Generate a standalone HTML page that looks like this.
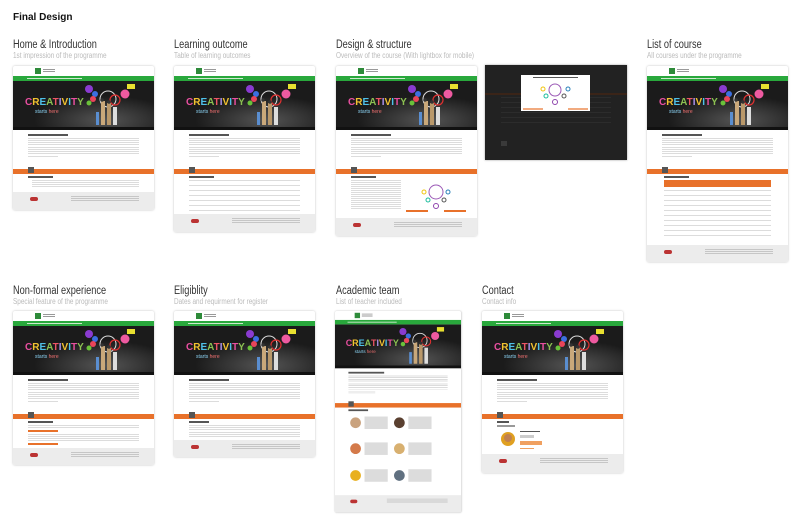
<!DOCTYPE html>
<html><head><meta charset="utf-8"><style>
*{margin:0;padding:0;box-sizing:border-box}
body{width:800px;height:524px;background:#fff;position:relative;overflow:hidden;font-family:"Liberation Sans",sans-serif}
.h1{position:absolute;left:13px;top:12px;font-size:10px;font-weight:bold;color:#111}
.t{position:absolute;font-size:11.5px;color:#333;line-height:12px;transform:scaleX(.8);transform-origin:0 0;white-space:nowrap}
.t span{display:block;font-size:8px;color:#bbb;line-height:10px;margin-top:0px}
.c{position:absolute;width:141px;background:#fff;box-shadow:0 0 2px rgba(0,0,0,.25);border-radius:2px;overflow:hidden;display:flex;flex-direction:column}
.hd{height:10px;position:relative;flex:none}
.hd:before{content:"";position:absolute;left:22px;top:2px;width:6px;height:6px;background:#2e8b3a}
.hd:after{content:"";position:absolute;left:30px;top:3px;width:12px;height:4px;background:repeating-linear-gradient(#999 0 1px,transparent 1px 2px)}
.gr{height:5px;background:#29a83c;flex:none;position:relative}
.gr:after{content:"";position:absolute;left:14px;top:2px;width:55px;height:1px;background:#cfe9cf}
.hero{height:49px;flex:none;background:#1c1c1c;display:block}
.in{height:39px;flex:none;position:relative;padding:4px 15px 0}
.nv{height:5px;background:#e8712a;flex:none}
.ct{flex:none;position:relative;padding:2px 15px}
.ft{flex:1;background:#ececec;position:relative}
.ft:before{content:"";position:absolute;left:17px;top:5px;width:8px;height:4px;background:#b33;border-radius:2px}
.ft:after{content:"";position:absolute;left:58px;top:4px;width:68px;height:5px;background:repeating-linear-gradient(#c6c6c6 0 1px,transparent 1px 2px)}
.ln{height:5px;background:repeating-linear-gradient(#dcdcdc 0 1px,transparent 1px 2px);margin-bottom:2px}
.tt{height:2px;width:40px;background:#555;margin-bottom:2px}
.qr{width:6px;height:6px;background:#555;display:inline-block}
.ot{height:2px;width:30px;background:#e8712a;margin:2px 0}
</style></head><body>
<div class="h1">Final Design</div>

<svg width="0" height="0" style="position:absolute"><defs>
<radialGradient id="rg" cx="0.65" cy="0.8" r="0.5"><stop offset="0" stop-color="#555"/><stop offset="1" stop-color="#1b1b1b"/></radialGradient>
<g id="hero">
<rect width="141" height="49" fill="url(#rg)"/>
<rect x="0" y="46" width="141" height="3" fill="#111"/>
<text x="12" y="24" font-size="10" font-weight="bold" fill="#e94fa0" font-family="Liberation Sans">C<tspan fill="#f2c230">R</tspan><tspan fill="#4fc1e9">E</tspan><tspan fill="#8cc152">A</tspan><tspan fill="#ed5565">T</tspan><tspan fill="#ac92ec">I</tspan><tspan fill="#f2c230">V</tspan><tspan fill="#4fc1e9">I</tspan><tspan fill="#e94fa0">T</tspan><tspan fill="#8cc152">Y</tspan></text>
<text x="22" y="32" font-size="5" fill="#8ad0f0" font-family="Liberation Sans">starts <tspan fill="#f07070">here</tspan></text>
<circle cx="76" cy="8" r="4" fill="#8a3bd0"/><circle cx="82" cy="13" r="3" fill="#3c6fe0"/>
<circle cx="80" cy="18" r="3" fill="#e8455a"/><circle cx="76" cy="22" r="2.5" fill="#6ac13a"/>
<circle cx="112" cy="13" r="4.5" fill="#ee5aa0"/><rect x="114" y="3" width="8" height="5" fill="#e8e030"/>
<circle cx="95" cy="18" r="8" fill="none" stroke="#ddd" stroke-width="1"/>
<circle cx="102" cy="19" r="5" fill="none" stroke="#e03030" stroke-width="1.2"/>
<rect x="88" y="20" width="4" height="24" fill="#c9a87a"/><rect x="94" y="22" width="4" height="22" fill="#b9986a"/>
<rect x="100" y="26" width="4" height="18" fill="#ddd"/><rect x="83" y="31" width="3" height="13" fill="#5a8ed0"/>
<circle cx="89" cy="19" r="1.8" fill="#333"/><circle cx="96" cy="21" r="1.8" fill="#333"/>
</g></defs></svg>

<!-- Row 1 -->
<div class="t" style="left:13px;top:39px">Home &amp; Introduction<span>1st impression of the programme</span></div>
<div class="c" style="left:13px;top:66px;height:144px"><div class="hd"></div><div class="gr"></div><svg class="hero" viewBox="0 0 141 49" preserveAspectRatio="none"><use href="#hero"/></svg><div class="in"><div class="tt"></div><div class="ln" style="height:7px"></div><div class="ln" style="height:7px"></div><div class="ln" style="width:30px;height:2px"></div><span class="qr"></span></div><div class="nv"></div><div class="ct" style="height:18px"><div class="tt" style="width:25px"></div><div class="ln" style="height:7px;margin-left:4px"></div></div><div class="ft"></div></div>

<div class="t" style="left:174px;top:39px">Learning outcome<span>Table of learning outcomes</span></div>
<div class="c" style="left:174px;top:66px;height:166px"><div class="hd"></div><div class="gr"></div><svg class="hero" viewBox="0 0 141 49" preserveAspectRatio="none"><use href="#hero"/></svg><div class="in"><div class="tt"></div><div class="ln" style="height:7px"></div><div class="ln" style="height:7px"></div><div class="ln" style="width:30px;height:2px"></div><span class="qr"></span></div><div class="nv"></div><div class="ct" style="height:40px"><div class="tt" style="width:25px"></div><div class="ln" style="height:35px;background:repeating-linear-gradient(#dcdcdc 0 1px,transparent 1px 5px)"></div></div><div class="ft"></div></div>

<div class="t" style="left:336px;top:39px">Design &amp; structure<span>Overview of the course (With lightbox for mobile)</span></div>
<div class="c" style="left:336px;top:66px;height:170px"><div class="hd"></div><div class="gr"></div><svg class="hero" viewBox="0 0 141 49" preserveAspectRatio="none"><use href="#hero"/></svg><div class="in"><div class="tt"></div><div class="ln" style="height:7px"></div><div class="ln" style="height:7px"></div><div class="ln" style="width:30px;height:2px"></div><span class="qr"></span></div><div class="nv"></div><div class="ct" style="height:44px"><div class="tt" style="width:25px"></div><div class="ln" style="width:50px;height:30px"></div><svg style="position:absolute;left:70px;top:4px" width="60" height="36"><circle cx="30" cy="14" r="7" fill="none" stroke="#9b59b6"/><circle cx="18" cy="14" r="2" fill="none" stroke="#f1c40f"/><circle cx="42" cy="14" r="2" fill="none" stroke="#2980b9"/><circle cx="22" cy="22" r="2" fill="none" stroke="#1abc9c"/><circle cx="38" cy="22" r="2" fill="none" stroke="#555"/><circle cx="30" cy="28" r="2.5" fill="none" stroke="#8e44ad"/><rect x="0" y="32" width="22" height="2" fill="#e8712a"/><rect x="38" y="32" width="22" height="2" fill="#e8712a"/></svg></div><div class="ft"></div></div>

<div style="position:absolute;left:485px;top:65px;width:142px;height:95px;background:#222;box-shadow:0 0 2px rgba(0,0,0,.4)">
<div style="position:absolute;left:0;top:28px;width:142px;height:2px;background:#3a2418"></div>
<div style="position:absolute;left:16px;top:32px;width:110px;height:30px;background:repeating-linear-gradient(#2c2c2c 0 1px,transparent 1px 5px)"></div>
<div style="position:absolute;left:16px;top:76px;width:6px;height:5px;background:#3a3a3a"></div>
<div style="position:absolute;left:36px;top:10px;width:69px;height:36px;background:#fff"><svg width="69" height="36"><rect x="12" y="2" width="45" height="1" fill="#555"/><circle cx="34" cy="15" r="6" fill="none" stroke="#9b59b6"/><circle cx="22" cy="14" r="2" fill="none" stroke="#f1c40f"/><circle cx="47" cy="14" r="2" fill="none" stroke="#2980b9"/><circle cx="25" cy="21" r="2" fill="none" stroke="#1abc9c"/><circle cx="43" cy="21" r="2" fill="none" stroke="#555"/><circle cx="34" cy="27" r="2.5" fill="none" stroke="#8e44ad"/><rect x="2" y="33" width="20" height="2" fill="#e8712a" opacity=".6"/><rect x="47" y="33" width="20" height="2" fill="#e8712a" opacity=".6"/></svg></div></div>

<div class="t" style="left:647px;top:39px">List of course<span>All courses under the programme</span></div>
<div class="c" style="left:647px;top:66px;height:196px"><div class="hd"></div><div class="gr"></div><svg class="hero" viewBox="0 0 141 49" preserveAspectRatio="none"><use href="#hero"/></svg><div class="in"><div class="tt"></div><div class="ln" style="height:7px"></div><div class="ln" style="height:7px"></div><div class="ln" style="width:30px;height:2px"></div><span class="qr"></span></div><div class="nv"></div><div class="ct" style="height:71px;padding:2px 17px"><div class="tt" style="width:25px"></div><div style="height:7px;background:#e8712a;margin-bottom:3px"></div><div class="ln" style="height:50px;background:repeating-linear-gradient(#dcdcdc 0 1px,transparent 1px 5px)"></div></div><div class="ft"></div></div>

<!-- Row 2 -->
<div class="t" style="left:13px;top:285px">Non-formal experience<span>Special feature of the programme</span></div>
<div class="c" style="left:13px;top:311px;height:154px"><div class="hd"></div><div class="gr"></div><svg class="hero" viewBox="0 0 141 49" preserveAspectRatio="none"><use href="#hero"/></svg><div class="in"><div class="tt"></div><div class="ln" style="height:7px"></div><div class="ln" style="height:7px"></div><div class="ln" style="width:30px;height:2px"></div><span class="qr"></span></div><div class="nv"></div><div class="ct" style="height:29px"><div class="tt" style="width:25px"></div><div class="ln" style="height:3px"></div><div class="ot"></div><div class="ln" style="height:7px"></div><div class="ot"></div></div><div class="ft"></div></div>

<div class="t" style="left:174px;top:285px">Eligiblity<span>Dates and requirment for register</span></div>
<div class="c" style="left:174px;top:311px;height:146px"><div class="hd"></div><div class="gr"></div><svg class="hero" viewBox="0 0 141 49" preserveAspectRatio="none"><use href="#hero"/></svg><div class="in"><div class="tt"></div><div class="ln" style="height:7px"></div><div class="ln" style="height:7px"></div><div class="ln" style="width:30px;height:2px"></div><span class="qr"></span></div><div class="nv"></div><div class="ct" style="height:21px"><div class="tt" style="width:20px"></div><div class="ln" style="height:5px"></div><div class="ln" style="height:5px"></div></div><div class="ft"></div></div>

<div class="t" style="left:336px;top:285px">Academic team<span>List of teacher included</span></div>
<div class="c" style="left:335px;top:311px;height:225px;transform:scale(.894);transform-origin:0 0"><div class="hd"></div><div class="gr"></div><svg class="hero" viewBox="0 0 141 49" preserveAspectRatio="none"><use href="#hero"/></svg><div class="in"><div class="tt"></div><div class="ln" style="height:7px"></div><div class="ln" style="height:7px"></div><div class="ln" style="width:30px;height:2px"></div><span class="qr"></span></div><div class="nv"></div><div class="ct" style="height:98px"><div class="tt" style="width:22px"></div>
<svg width="120" height="92" style="position:absolute;left:15px;top:6px"><g fill="#c9a27e"><circle cx="8" cy="11" r="6"/><circle cx="57" cy="11" r="6" fill="#5a4030"/><circle cx="8" cy="40" r="6" fill="#d47a4a"/><circle cx="57" cy="40" r="6" fill="#d8b070"/><circle cx="8" cy="70" r="6" fill="#e8b020"/><circle cx="57" cy="70" r="6" fill="#607080"/></g><g fill="#dcdcdc"><rect x="18" y="4" width="26" height="14"/><rect x="67" y="4" width="26" height="14"/><rect x="18" y="33" width="26" height="14"/><rect x="67" y="33" width="26" height="14"/><rect x="18" y="63" width="26" height="14"/><rect x="67" y="63" width="26" height="14"/></g></svg></div><div class="ft"></div></div>

<div class="t" style="left:482px;top:285px">Contact<span>Contact info</span></div>
<div class="c" style="left:482px;top:311px;height:162px"><div class="hd"></div><div class="gr"></div><svg class="hero" viewBox="0 0 141 49" preserveAspectRatio="none"><use href="#hero"/></svg><div class="in"><div class="tt"></div><div class="ln" style="height:7px"></div><div class="ln" style="height:7px"></div><div class="ln" style="width:30px;height:2px"></div><span class="qr"></span></div><div class="nv"></div><div class="ct" style="height:35px"><div class="tt" style="width:12px"></div><div class="tt" style="width:18px;background:#999"></div><svg width="80" height="24" style="position:absolute;left:18px;top:10px"><circle cx="8" cy="10" r="7" fill="#e0a020"/><circle cx="8" cy="9" r="4" fill="#c08050"/><rect x="20" y="2" width="20" height="1" fill="#555"/><rect x="20" y="6" width="14" height="3" fill="#ccc"/><rect x="20" y="12" width="22" height="4" fill="#f0a060"/><rect x="20" y="19" width="14" height="1" fill="#f0a060"/></svg></div><div class="ft"></div></div>
</body></html>
